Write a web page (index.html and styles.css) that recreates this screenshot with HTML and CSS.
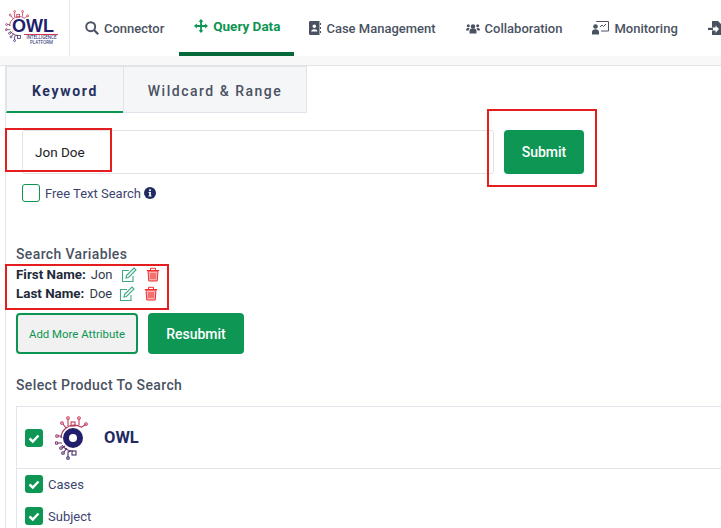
FILE: index.html
```html
<!DOCTYPE html>
<html lang="en">
<head>
<meta charset="UTF-8">
<meta name="viewport" content="width=device-width, initial-scale=1.0">
<title>Query Data</title>
<link rel="stylesheet" href="styles.css">
</head>
<body>
<svg class="defs" width="0" height="0">
  <defs>
    <linearGradient id="circuit" gradientUnits="userSpaceOnUse" x1="0" y1="0" x2="0" y2="44">
      <stop offset="0" stop-color="#d8384f"/>
      <stop offset="0.5" stop-color="#8d3768"/>
      <stop offset="1" stop-color="#2b2a6b"/>
    </linearGradient>
    <symbol id="owl-circuit" viewBox="0 0 34 44">
      <g fill="none" stroke="url(#circuit)" stroke-width="1.100">
        <path d="M6 22a13 13 0 0 1 5-10 13 13 0 0 1 15-1M7 29a13 13 0 0 0 11 6"/>
        <path d="M13 3v7M24 3v6M30.500 8.500 26 11.500M8 8l3 4M3 20h3l1 2M2 27h5M7 32l3-2M9 36l3-4M13 41v-5l3-1"/>
        <rect x="16" y="6" width="4" height="4"/>
        <rect x="17" y="35" width="4" height="4"/>
        <circle cx="13" cy="2" r="1.300"/>
        <circle cx="24" cy="2" r="1.300"/>
        <circle cx="31" cy="8" r="1.300"/>
        <circle cx="7" cy="7" r="1.300"/>
        <circle cx="2" cy="20" r="1.300"/>
        <circle cx="1.500" cy="27" r="1.300"/>
        <circle cx="6" cy="32" r="1.300"/>
        <circle cx="8" cy="37" r="1.300"/>
        <circle cx="13" cy="42" r="1.300"/>
      </g>
    </symbol>
    <symbol id="icon-edit" viewBox="0 0 16 16">
      <g fill="none" stroke="#3fa88a" stroke-width="1.100">
        <path d="M12 9v5.500H1.500V3.500H8"/>
        <path d="M5.500 8.500 13 1l2 2-7.500 7.500-2.500.5z"/>
      </g>
    </symbol>
    <symbol id="icon-trash" viewBox="0 0 14 15">
      <g fill="#fbb3b3" stroke="#ef2f2f" stroke-width="1">
        <path d="M2 4h10l-.8 10H2.800z"/>
        <path d="M.8 3.500h12.400M4.500 3.500V1.300h5v2.200" fill="none"/>
        <path d="M5 6v6M7 6v6M9 6v6" fill="none"/>
      </g>
    </symbol>
    <symbol id="icon-check" viewBox="0 0 18 18">
      <rect width="18" height="18" rx="3" fill="#0d9654"/>
      <path d="M4.500 9.500 7.800 12.500 13.500 6.500" fill="none" stroke="#fff" stroke-width="2.400"/>
    </symbol>
  </defs>
</svg>

<header class="topbar">
  <div class="brand">
    <div class="brand-logo">
      <svg class="brand-mark" width="25" height="32"><use href="#owl-circuit"/></svg>
      <span class="brand-name">OWL</span>
      <span class="brand-rule"></span>
      <span class="brand-sub">INTELLIGENCE<br>PLATFORM</span>
    </div>
  </div>
  <nav class="nav">
    <a class="nav-item">
      <svg width="14" height="14" viewBox="0 0 14 14"><circle cx="5.700" cy="5.700" r="4.500" fill="none" stroke="currentColor" stroke-width="1.900"/><path d="M9 9l4.200 4.200" stroke="currentColor" stroke-width="2.200"/></svg>
      Connector
    </a>
    <a class="nav-item nav-active">
      <svg width="14" height="14" viewBox="0 0 14 14"><path d="M7 0l2.500 2.800H7.900v3.300h3.300V4.500L14 7l-2.800 2.500V7.900H7.900v3.300h1.600L7 14l-2.500-2.800h1.600V7.900H2.800v1.600L0 7l2.800-2.500v1.600h3.300V2.800H4.500z" fill="currentColor"/></svg>
      Query Data
    </a>
    <a class="nav-item">
      <svg width="12" height="14" viewBox="0 0 12 14"><path fill-rule="evenodd" d="M1.300 0h9.200v14H1.300A1.300 1.300 0 0 1 0 12.700V1.300A1.300 1.300 0 0 1 1.300 0zM5.300 3.500a1.800 1.800 0 1 0 0 3.600 1.800 1.800 0 0 0 0-3.600zM2.200 10.500h6.200c0-3-6.200-3-6.200 0z" fill="currentColor"/><path d="M11 2h1v2h-1zM11 6h1v2h-1zM11 10h1v2h-1z" fill="currentColor"/></svg>
      Case Management
    </a>
    <a class="nav-item">
      <svg width="14" height="11" viewBox="0 0 14 11"><circle cx="7" cy="3.500" r="2.200" fill="currentColor"/><circle cx="2.300" cy="2.800" r="1.500" fill="currentColor"/><circle cx="11.700" cy="2.800" r="1.500" fill="currentColor"/><path d="M3.500 10.500V8c0-2 1.500-2.500 3.500-2.500s3.500.5 3.500 2.500v2.500zM0 7.500C0 5.500 1 5 2.300 5c.6 0 1 .1 1.300.3C3 6 2.700 6.800 2.700 7.500zM14 7.500c0-2-1-2.500-2.300-2.500-.6 0-1 .1-1.300.3.600.7.900 1.500.9 2.200z" fill="currentColor"/></svg>
      Collaboration
    </a>
    <a class="nav-item">
      <svg width="17" height="14" viewBox="0 0 17 14"><path d="M4.500 1V.5h12V10H9" fill="none" stroke="currentColor" stroke-width="1"/><path d="M8 6l2-2 1.500 1.500L14 3" fill="none" stroke="currentColor" stroke-width="1"/><circle cx="3.500" cy="5.500" r="2.300" fill="currentColor"/><path d="M0 13.500v-2.500c0-2 1.500-2.800 3.500-2.800S7 9 7 11v2.500z" fill="currentColor"/></svg>
      Monitoring
    </a>
    <a class="nav-item">
      <svg width="14" height="14" viewBox="0 0 14 14"><path d="M4 0h6l3.500 3.500V14H4V9.500h3.500V12L11 8 7.500 4.500V6.500H4z" fill="currentColor"/><path d="M0 6.800h5V9H0z" fill="currentColor"/></svg>
    </a>
  </nav>
</header>
<div class="topbar-band"></div>

<main class="panel">
  <div class="tabs">
    <div class="tab tab-active">Keyword</div>
    <div class="tab">Wildcard &amp; Range</div>
  </div>

  <div class="search-row">
    <div class="search-input">Jon Doe</div>
    <button class="btn btn-submit">Submit</button>
  </div>

  <label class="free-text">
    <span class="checkbox-empty"></span>
    Free Text Search
    <svg class="info-icon" width="12" height="12" viewBox="0 0 12 12"><circle cx="6" cy="6" r="6" fill="#1f2a63"/><rect x="5.100" y="2.300" width="1.800" height="1.800" fill="#fff"/><path d="M4.600 5h2.300v3.600h.6v1H4.600v-1h.6V6h-.6z" fill="#fff"/></svg>
  </label>

  <section class="variables">
    <h4 class="section-title">Search Variables</h4>
    <div class="var-row">
      <b>First Name:</b><span class="var-value">Jon</span>
      <svg class="var-edit" width="16" height="16"><use href="#icon-edit"/></svg>
      <svg class="var-trash" width="14" height="15"><use href="#icon-trash"/></svg>
    </div>
    <div class="var-row">
      <b>Last Name:</b><span class="var-value">Doe</span>
      <svg class="var-edit" width="16" height="16"><use href="#icon-edit"/></svg>
      <svg class="var-trash" width="14" height="15"><use href="#icon-trash"/></svg>
    </div>
    <div class="var-actions">
      <button class="btn btn-outline">Add More Attribute</button>
      <button class="btn btn-resubmit">Resubmit</button>
    </div>
  </section>

  <section class="products">
    <h4 class="section-title">Select Product To Search</h4>
    <div class="product-box">
      <div class="product-head">
        <svg width="18" height="18"><use href="#icon-check"/></svg>
        <div class="product-mark">
          <svg width="34" height="44"><use href="#owl-circuit"/></svg>
          <span class="product-ring"></span>
        </div>
        <span class="product-name">OWL</span>
      </div>
      <div class="product-list">
        <div class="product-row"><svg width="18" height="18"><use href="#icon-check"/></svg>Cases</div>
        <div class="product-row"><svg width="18" height="18"><use href="#icon-check"/></svg>Subject</div>
      </div>
    </div>
  </section>

  <!-- red callouts drawn over the screenshot -->
  <div class="callout callout-input"></div>
  <div class="callout callout-submit"></div>
  <div class="callout callout-vars"></div>
</main>
</body>
</html>
```

FILE: styles.css
```css
* {
  box-sizing: border-box;
}
html, body {
  height: 100%;
}
body {
  margin: 0;
  width: 721px;
  height: 528px;
  overflow: hidden;
  background-color: #ffffff;
  font-family: Roboto, Arial, sans-serif;
  color: #4a5262;
}
.defs {
  position: absolute;
}

/* top navigation */
.topbar {
  display: flex;
  height: 56px;
  background-color: #ffffff;
}
.brand {
  flex: 0 0 70px;
  border-right: 1px solid #e6e6e6;
  padding: 10px 0 0 5px;
}
.brand-logo {
  position: relative;
  width: 55px;
  height: 36px;
}
.brand-mark {
  display: block;
}
.brand-name {
  position: absolute;
  left: 7px;
  top: 7px;
  font-family: "Liberation Sans", Arial, sans-serif;
  font-size: 18px;
  line-height: 18px;
  font-weight: 700;
  color: #211f6b;
}
.brand-rule {
  position: absolute;
  left: 19px;
  top: 24px;
  width: 34px;
  height: 1px;
  background-color: #d8384f;
}
.brand-sub {
  position: absolute;
  left: 19px;
  top: 26px;
  width: 35px;
  font-size: 4.500px;
  line-height: 4.500px;
  text-align: center;
  color: #211f6b;
}
.nav {
  display: flex;
  white-space: nowrap;
}
.nav-item {
  display: flex;
  align-items: center;
  gap: 5px;
  padding: 0 15px;
  font-size: 13px;
  font-weight: 500;
  color: #4a5262;
}
.nav-active {
  color: #0c9552;
  font-size: 13.500px;
  font-weight: 700;
  padding-right: 14px;
  border-bottom: 4px solid #056839;
}
.topbar-band {
  height: 10px;
  background-color: #f8f8f8;
  border-bottom: 1px solid #e3e3e3;
}

/* page body */
.panel {
  position: relative;
  margin-left: 5px;
  height: 462px;
  border-left: 1px solid #e3e5ea;
}
.tabs {
  display: flex;
}
.tab {
  width: 184px;
  height: 47px;
  border: 1.500px solid #e1e4ea;
  background-color: #f5f6f8;
  font-size: 14px;
  font-weight: 500;
  letter-spacing: 1.500px;
  line-height: 48px;
  text-align: center;
}
.tab-active {
  width: 117px;
  color: #25315f;
  font-weight: 700;
  letter-spacing: 1.700px;
  border-right: 0;
  border-bottom: 2px solid #0c9552;
}
.search-row {
  display: flex;
  gap: 10px;
  margin: 17px 0 0 16px;
}
.search-input {
  width: 472px;
  height: 44px;
  padding-left: 12px;
  border: 1px solid #e3e3e3;
  border-radius: 3px;
  font-size: 13.500px;
  line-height: 43px;
  color: #222222;
}
.btn {
  border-radius: 4px;
  border: 0;
  font-family: inherit;
  font-weight: 500;
  color: #ffffff;
}
.btn-submit {
  width: 80px;
  height: 44px;
  background-color: #0d9654;
  font-size: 14px;
}
.free-text {
  display: flex;
  align-items: center;
  margin: 10px 0 0 16px;
  height: 18px;
  font-size: 13px;
  color: #3c4570;
}
.checkbox-empty {
  width: 18px;
  height: 18px;
  margin-right: 5px;
  border: 1px solid #0c9552;
  border-radius: 3px;
}
.info-icon {
  margin-left: 3px;
}
.section-title {
  margin: 0;
  font-size: 14px;
  line-height: 18px;
  font-weight: 500;
  letter-spacing: 0.370px;
  color: #4a5262;
}
.variables {
  margin: 43px 0 0 10px;
}
.section-title + .var-row {
  margin-top: 2px;
}
.var-row {
  display: flex;
  align-items: center;
  height: 19px;
  font-size: 13px;
  color: #333a4a;
}
.var-row b {
  color: #222a3a;
  font-size: 13.400px;
  font-weight: 700;
}
.var-value {
  margin-left: 5px;
  width: 30px;
}
.var-trash {
  margin-left: 9px;
}
.var-actions {
  display: flex;
  gap: 10px;
  margin-top: 10px;
}
.btn-outline {
  width: 122px;
  height: 41px;
  background-color: #f1f1f1;
  border: 2px solid #0c9552;
  font-size: 11.400px;
  font-weight: 400;
  color: #0c9552;
}
.btn-resubmit {
  width: 96px;
  height: 41px;
  background-color: #0d9654;
  font-size: 14px;
}
.products {
  margin: 22px 0 0 10px;
}
.product-box {
  margin-top: 12px;
  width: 720px;
  border: 1px solid #e1e4ea;
  border-right: 0;
}
.product-head {
  display: flex;
  align-items: center;
  height: 62px;
  padding-left: 8px;
  border-bottom: 1px solid #e1e4ea;
}
.product-mark {
  position: relative;
  width: 34px;
  height: 44px;
  margin-left: 12px;
}
.product-mark svg {
  display: block;
}
.product-ring {
  position: absolute;
  left: 8px;
  top: 12px;
  width: 20px;
  height: 20px;
  border: 6px solid #211f6b;
  border-radius: 50%;
}
.product-name {
  margin-left: 15px;
  font-size: 16.500px;
  font-weight: 700;
  color: #1f2a63;
}
.product-list {
  padding: 6px 0 0 8px;
}
.product-row {
  display: flex;
  align-items: center;
  gap: 5px;
  height: 18px;
  margin-bottom: 14px;
  font-size: 13px;
  color: #3c4570;
}

/* callouts */
.callout {
  position: absolute;
  border: 2px solid #e41e1e;
}
.callout-input {
  left: -1px;
  top: 62px;
  width: 107px;
  height: 44px;
}
.callout-submit {
  left: 481px;
  top: 43px;
  width: 110px;
  height: 78px;
}
.callout-vars {
  left: -1px;
  top: 198px;
  width: 164px;
  height: 46px;
}
```
